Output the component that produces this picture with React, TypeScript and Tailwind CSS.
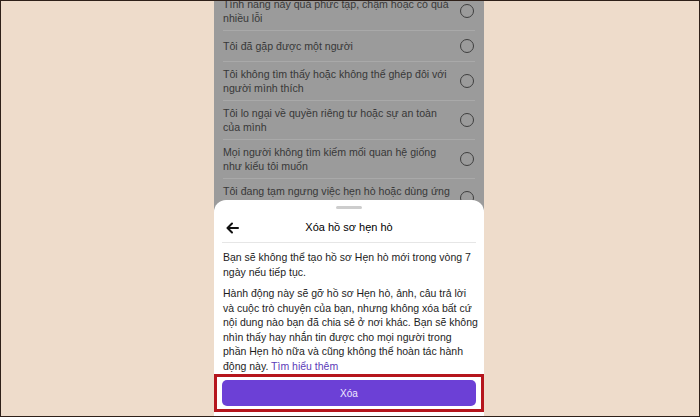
const reasons = [
  ['Tính năng này quá phức tạp, chậm hoặc có quá', 'nhiều lỗi'],
  ['Tôi đã gặp được một người'],
  ['Tôi không tìm thấy hoặc không thể ghép đôi với', 'người mình thích'],
  ['Tôi lo ngại về quyền riêng tư hoặc sự an toàn', 'của mình'],
  ['Mọi người không tìm kiếm mối quan hệ giống', 'như kiểu tôi muốn'],
  ['Tôi đang tạm ngưng việc hẹn hò hoặc dùng ứng', 'dụng hẹn hò'],
]

const warning = [
  'Hành động này sẽ gỡ hồ sơ Hẹn hò, ảnh, câu trả lời',
  'và cuộc trò chuyện của bạn, nhưng không xóa bất cứ',
  'nội dung nào bạn đã chia sẻ ở nơi khác. Bạn sẽ không',
  'nhìn thấy hay nhắn tin được cho mọi người trong',
  'phần Hẹn hò nữa và cũng không thể hoàn tác hành',
]

function ReasonRow({ lines, last }: { lines: string[]; last: boolean }) {
  return (
    <div className={last ? 'mx-[9px] flex items-center py-[5px]' : 'mx-[9px] flex items-center border-b border-[#a9a9a9] py-[5px]'}>
      <p className="flex-1 whitespace-nowrap text-[10.6px] leading-[14px] text-[#383838]">
        {lines.map((l) => (
          <span key={l} className="block">{l}</span>
        ))}
      </p>
      <div className="flex h-5 w-[16px] items-center justify-center">
        <span className="block h-[14px] w-[14px] rounded-full border-[1.5px] border-[#3f3f3f]" />
      </div>
    </div>
  )
}

function BackArrow() {
  return (
    <svg width="13" height="12" viewBox="0 0 13 12" fill="none" stroke="#111" strokeWidth="2" strokeLinecap="round" strokeLinejoin="round">
      <path d="M12 6H1.8" />
      <path d="M6 1.5L1.5 6 6 10.5" />
    </svg>
  )
}

export default function App() {
  return (
    <div
      className="flex h-[417px] w-[700px] overflow-hidden border border-[#2e2019] bg-[#eedccb]"
      style={{ fontFamily: '"Liberation Sans", Arial, sans-serif' }}
    >
      <div className="ml-[213px] flex h-full w-[270px] flex-col bg-[#9b9b9b]">
        <div className="h-[199px] shrink-0 overflow-hidden">
          <div className="-mt-[9px]">
            {reasons.map((r, i) => (
              <ReasonRow key={r[0]} lines={r} last={i === reasons.length - 1} />
            ))}
          </div>
        </div>

        <div className="flex flex-1 flex-col rounded-t-[12px] bg-white">
          <div className="mx-auto mt-[6px] h-[3px] w-[26px] rounded-full bg-[#cdcdcd]" />
          <div className="mx-[8px] mt-[4px] flex h-[30px] items-center border-b border-[#e6e6e6]">
            <div className="w-[20px] pl-[4px]">
              <BackArrow />
            </div>
            <h1 className="flex-1 pr-[20px] text-center text-[11px] font-medium text-[#000]">Xóa hồ sơ hẹn hò</h1>
          </div>

          <div className="whitespace-nowrap px-[9px] pt-[7px] text-[10.5px] leading-[14.5px] text-[#1d1d1d]">
            <p>
              <span className="block">Bạn sẽ không thể tạo hồ sơ Hẹn hò mới trong vòng 7</span>
              <span className="block">ngày nếu tiếp tục.</span>
            </p>
            <p className="mt-[7px]">
              {warning.map((l) => (
                <span key={l} className="block">{l}</span>
              ))}
              <span className="block">
                động này. <span className="text-[#5b3bb8]">Tìm hiểu thêm</span>
              </span>
            </p>
          </div>

          <div className="mt-[1px] border-[3px] border-[#b5161d] px-[5px] py-[3px]">
            <button className="flex h-[26px] w-full items-center justify-center rounded-[5px] bg-[#6c40d6] text-[10px] text-[#efe9ff]">
              Xóa
            </button>
          </div>
        </div>
      </div>
    </div>
  )
}
